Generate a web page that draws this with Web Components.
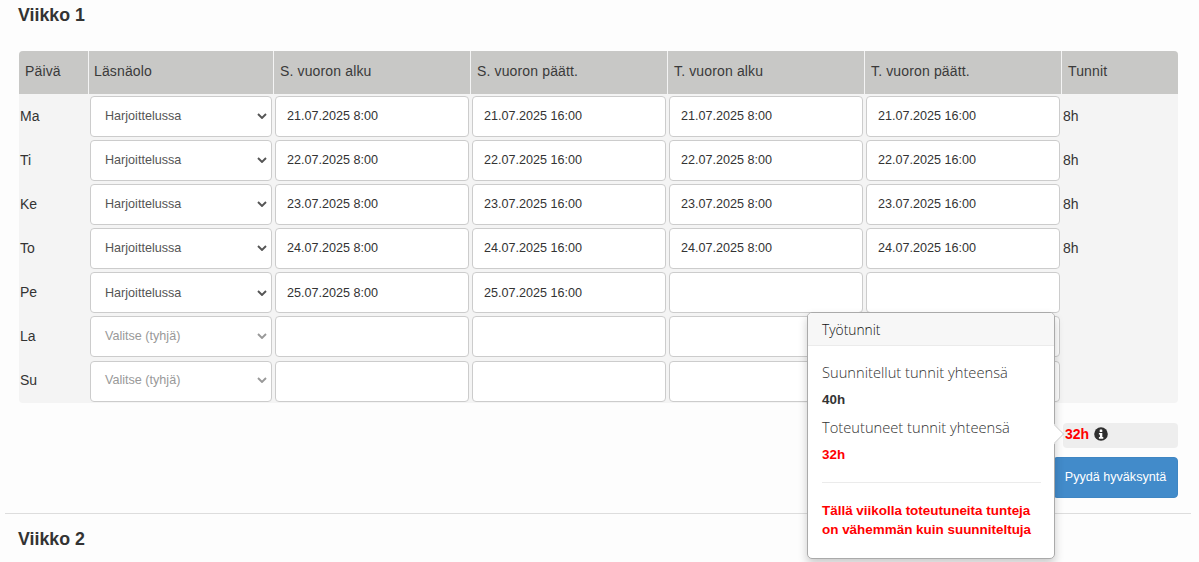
<!DOCTYPE html>
<html lang="fi">
<head>
<meta charset="utf-8">
<title>Viikko</title>
<style>
  html, body { margin: 0; height: 562px; overflow: hidden; background: #fdfdfd; }
  body { font-family: "Liberation Sans", Arial, sans-serif; color: #333; }
</style>
</head>
<body>
<week-section heading="Viikko 1">
  <week-table></week-table>
  <week-footer></week-footer>
</week-section>
<week-section heading="Viikko 2" class="second"></week-section>

<script>
const DAYS = [
  { day: "Ma", type: "Harjoittelussa", date: "21.07.2025", hours: "8h", second: true },
  { day: "Ti", type: "Harjoittelussa", date: "22.07.2025", hours: "8h", second: true },
  { day: "Ke", type: "Harjoittelussa", date: "23.07.2025", hours: "8h", second: true },
  { day: "To", type: "Harjoittelussa", date: "24.07.2025", hours: "8h", second: true },
  { day: "Pe", type: "Harjoittelussa", date: "25.07.2025", hours: "", second: false },
  { day: "La", type: "Valitse (tyhjä)", date: "", hours: "", second: false },
  { day: "Su", type: "Valitse (tyhjä)", date: "", hours: "", second: false },
];
const HEADERS = ["Päivä", "Läsnäolo", "S. vuoron alku", "S. vuoron päätt.", "T. vuoron alku", "T. vuoron päätt.", "Tunnit"];

class WeekSection extends HTMLElement {
  constructor() {
    super();
    this.shadowDOM = this.attachShadow({ mode: "open" });
  }

  connectedCallback() {
    this.shadowDOM.innerHTML = `
      <style>
        :host { display: block; }
        h2 {
          margin: 0;
          padding: 5px 0 0 18px;
          font-size: 17.8px;
          line-height: 21px;
          font-weight: 700;
          color: #333;
        }
        :host(.second) h2 { padding-top: 15px; }
        .body { padding-top: 25px; }
        :host(.second) .body { display: none; }
      </style>
      <h2>${this.getAttribute("heading")}</h2>
      <div class="body"><slot></slot></div>`;
  }
}

class ShiftField extends HTMLElement {
  constructor() {
    super();
    this.shadowDOM = this.attachShadow({ mode: "open" });
    this.shadowDOM.innerHTML = `
      <style>
        :host {
          display: flex;
          align-items: center;
          box-sizing: border-box;
          height: 41px;
          padding: 0 0 2px 11px;
          background: #fff;
          border: 1px solid #ccc;
          border-radius: 4px;
          font-size: 12.6px;
          color: #333;
          white-space: nowrap;
        }
      </style>
      <slot></slot>`;
  }
}

class ShiftSelect extends HTMLElement {
  constructor() {
    super();
    this.shadowDOM = this.attachShadow({ mode: "open" });
    this.shadowDOM.innerHTML = `
      <style>
        :host {
          display: flex;
          align-items: center;
          justify-content: space-between;
          box-sizing: border-box;
          height: 41px;
          padding: 0 2px 2px 14px;
          background: #fff;
          border: 1px solid #ccc;
          border-radius: 4px;
          font-size: 12.6px;
          color: #555;
          white-space: nowrap;
        }
        :host([empty]) { color: #999; }
        svg { width: 10px; height: 6px; margin-right: 2px; color: #555; }
        :host([empty]) svg { color: #999; }
      </style>
      <slot></slot>
      <svg viewBox="0 0 10 6"><path d="M1 1l4 4 4-4" fill="none" stroke="currentColor" stroke-width="1.9"/></svg>`;
  }
}

class WeekTable extends HTMLElement {
  constructor() {
    super();
    this.shadowDOM = this.attachShadow({ mode: "open" });
  }

  connectedCallback() {
    const head = HEADERS.map((h) => `<div class="th">${h}</div>`).join("");
    const rows = DAYS.map((d) => {
      const end = d.date ? `${d.date} 16:00` : "";
      const start = d.date ? `${d.date} 8:00` : "";
      return `
        <div class="row">
          <div class="day">${d.day}</div>
          <shift-select ${d.date ? "" : "empty"}>${d.type}</shift-select>
          <shift-field>${start}</shift-field>
          <shift-field>${end}</shift-field>
          <shift-field>${d.second ? start : ""}</shift-field>
          <shift-field>${d.second ? end : ""}</shift-field>
          <div class="hours">${d.hours}</div>
        </div>`;
    }).join("");
    this.shadowDOM.innerHTML = `
      <style>
        :host {
          display: block;
          margin: 0 21px 0 19px;
          background: #f4f4f4;
          border-radius: 4px;
          overflow: hidden;
          font-size: 14px;
        }
        .head, .row {
          display: grid;
          grid-template-columns: 69px 184px 196px 196px 196px 196px 116px;
          column-gap: 1px;
        }
        .head { height: 43px; margin-bottom: 2px; }
        .th {
          display: flex;
          align-items: center;
          padding: 0 0 3px 6px;
          background: #c8c8c6;
          color: #3a3a3a;
          letter-spacing: .14px;
        }
        .th:nth-child(2) { padding-left: 5px; }
        .row { height: 44.1px; align-items: start; }
        .row > * { margin: 0 1px; }
        .row.pe > :not(.day) { padding-bottom: 0; }
        .day, .hours { height: 41px; line-height: 41px; color: #333; }
        .day { margin: 0 0 0 1px; }
        .row:last-child { height: 42.4px; }
        .row:last-child .day { line-height: 39px; }
      </style>
      <div class="head">${head}</div>
      ${rows}`;
    this.shadowDOM.querySelectorAll(".row")[4].classList.add("pe");
  }
}

class HoursPopover extends HTMLElement {
  constructor() {
    super();
    this.shadowDOM = this.attachShadow({ mode: "open" });
    this.shadowDOM.innerHTML = `
      <style>
        :host {
          position: absolute;
          left: 807px;
          top: 312px;
          width: 248px;
          box-sizing: border-box;
          height: 247px;
          background: #fff;
          border: 1px solid #aaa;
          border-radius: 5px;
          box-shadow: 0 5px 10px rgba(0, 0, 0, .2);
          font-family: "Open Sans", sans-serif;
          color: #333;
        }
        header {
          position: relative;
          height: 32px;
          line-height: 33px;
          padding-left: 14px;
          background: #f7f7f7;
          border-bottom: 1px solid #ebebeb;
          border-radius: 4px 4px 0 0;
          font-size: 13.8px;
          font-weight: 300;
          color: #111;
        }
        .content { position: relative; padding: 13px 14px 0 14px; background: #fff; border-radius: 0 0 4px 4px; }
        p { margin: 0; font-size: 14.7px; font-weight: 300; line-height: 26px; white-space: nowrap; }
        b {
          display: block;
          font-family: "Liberation Sans", Arial, sans-serif;
          font-size: 13.4px;
          line-height: 29px;
        }
        .red { color: #f00; }
        hr { margin: 13px 0 0 0; width: 219px; border: 0; border-top: 1px solid #ebebeb; }
        .note {
          margin: 18px 0 0 0;
          font-family: "Liberation Sans", Arial, sans-serif;
          font-size: 13.45px;
          line-height: 19px;
          font-weight: 700;
          color: #f00;
          white-space: nowrap;
        }
        .arrow {
          position: absolute;
          left: 238px;
          top: 113px;
          width: 16px;
          height: 16px;
          box-sizing: border-box;
          background: #fff;
          transform: rotate(45deg) scale(.9);
          border: 1px solid #d4d4d4;
          border-left: 0;
          border-bottom: 0;
        }
      </style>
      <div class="arrow"></div>
      <header>Työtunnit</header>
      <div class="content">
        <p>Suunnitellut tunnit yhteensä</p>
        <b>40h</b>
        <p>Toteutuneet tunnit yhteensä</p>
        <b class="red">32h</b>
        <hr>
        <div class="note">Tällä viikolla toteutuneita tunteja<br>on vähemmän kuin suunniteltuja</div>
      </div>`;
  }
}

class WeekFooter extends HTMLElement {
  constructor() {
    super();
    this.shadowDOM = this.attachShadow({ mode: "open" });
    this.shadowDOM.innerHTML = `
      <style>
        :host {
          display: block;
          margin: 0 8px 0 5px;
          height: 111px;
          box-sizing: border-box;
          padding: 20px 13px 0 0;
          border-bottom: 1px solid #ddd;
        }
        .col {
          display: flex;
          flex-direction: column;
          align-items: flex-end;
          gap: 9px;
        }
        .total {
          display: flex;
          align-items: center;
          gap: 5px;
          box-sizing: border-box;
          width: 115px;
          height: 25px;
          padding: 0 0 2px 2px;
          background: #eee;
          border-radius: 4px;
          color: #f00;
          font-size: 14px;
          font-weight: 700;
        }
        svg { width: 14px; height: 14px; margin-top: -1px; }
        button {
          width: 125px;
          height: 41px;
          padding: 0;
          background: #428bca;
          border: 1px solid #3f86c3;
          border-radius: 4px;
          color: #fff;
          font: 12.6px "Liberation Sans", Arial, sans-serif;
        }
      </style>
      <div class="col">
        <div class="total">32h
          <svg viewBox="0 0 14 14"><circle cx="7" cy="7" r="6.8" fill="#2f2f2f"/><rect x="5.7" y="2.4" width="2.6" height="2.5" rx=".5" fill="#fff"/><path d="M4.9 5.9h3.4v4.2h1v1.6H4.9v-1.6h1V7.5h-1z" fill="#fff"/></svg>
        </div>
        <button>Pyydä hyväksyntä</button>
      </div>
      <hours-popover></hours-popover>`;
  }
}

customElements.define("hours-popover", HoursPopover);
customElements.define("shift-field", ShiftField);
customElements.define("shift-select", ShiftSelect);
customElements.define("week-table", WeekTable);
customElements.define("week-footer", WeekFooter);
customElements.define("week-section", WeekSection);
</script>
</body>
</html>
